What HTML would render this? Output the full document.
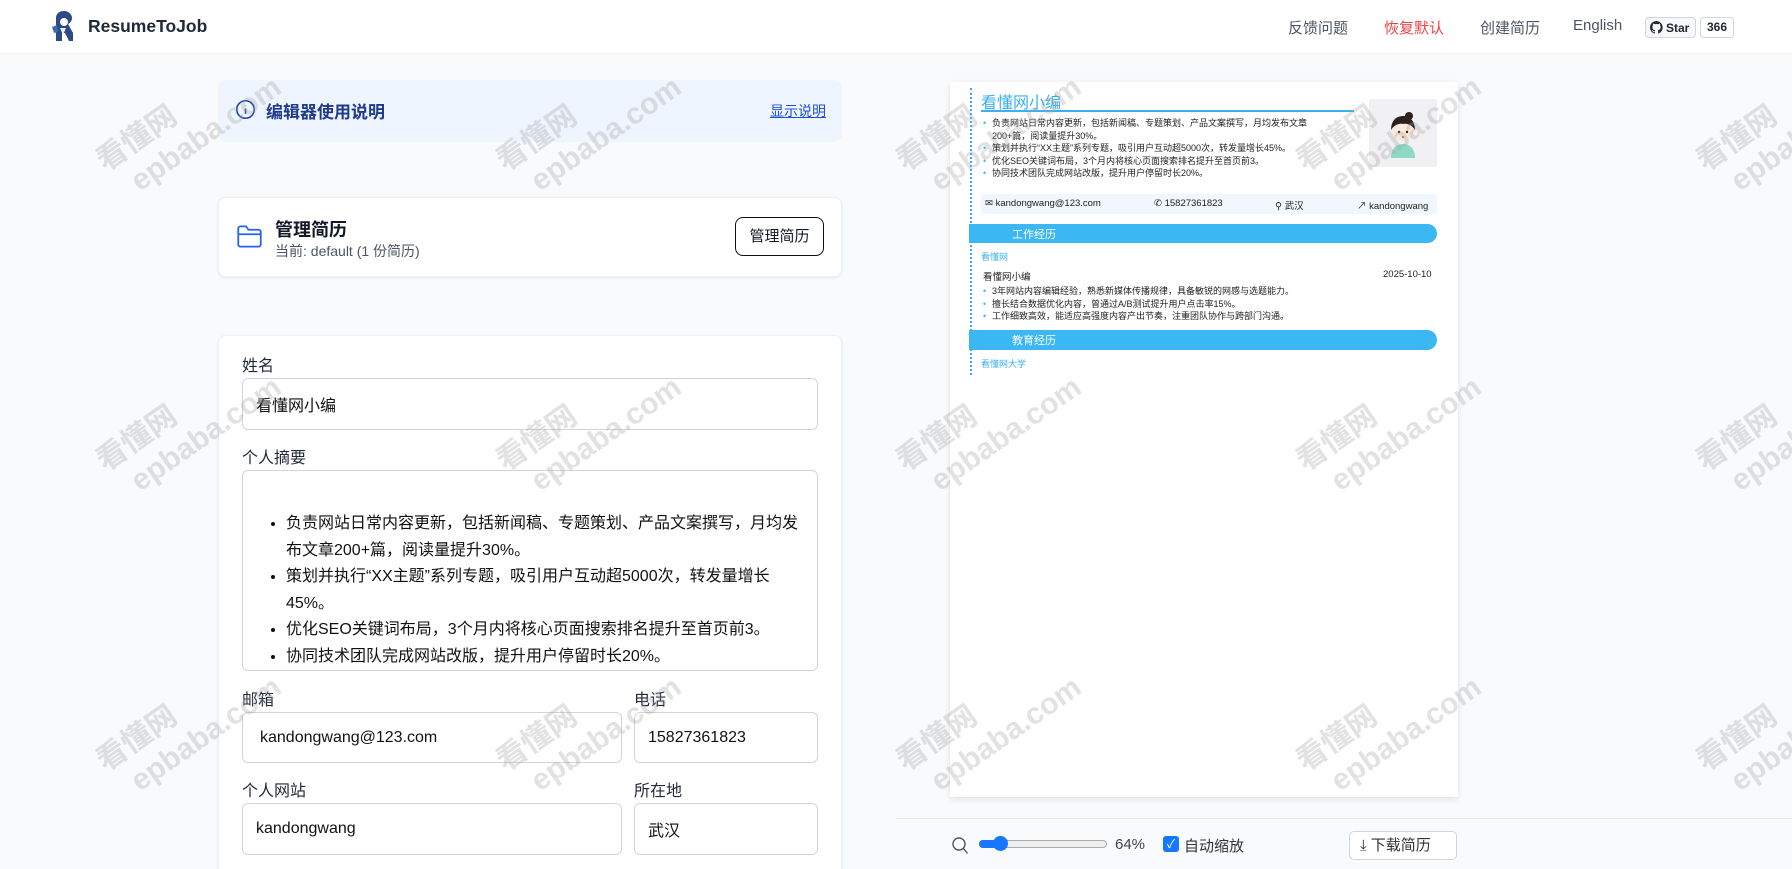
<!DOCTYPE html>
<html style="width:1792px;height:869px;overflow:hidden"><head><meta charset="utf-8">
<style>
*{box-sizing:border-box;margin:0;padding:0}
body{width:1792px;height:869px;overflow:hidden;background:#f8fafc;font-family:"Liberation Sans","Noto Sans CJK SC",sans-serif;color:#111827;position:relative}
.a{position:absolute}
.hdr{left:0;top:0;width:1792px;height:53px;background:#fff;box-shadow:0 1px 2px rgba(0,0,0,.04)}
.nav{top:17px;font-size:15px;color:#4b5563}
.card{background:#fff;border-radius:8px;box-shadow:0 1px 3px rgba(0,0,0,.08);border:1px solid #eef0f3}
.lbl{font-size:16px;color:#1f2937}
.inp{background:#fff;border:1px solid #d1d5db;border-radius:6px;font-size:16px;color:#111;padding-left:13px;display:flex;align-items:center}
.wm{color:rgba(160,160,160,.3);font-size:30px;font-weight:bold;transform:rotate(-35deg);transform-origin:left top;line-height:36px;white-space:nowrap;pointer-events:none}
.rs{font-size:9px;color:#222;line-height:12.5px}
.rs li{list-style:none;position:relative;padding-left:11px}
.rs li:before{content:"•";position:absolute;left:2px;color:#38bdf8}
.sec{background:#3bb7f3;border-radius:0 12px 12px 0;color:#fff;font-size:11px;padding-left:43px;display:flex;align-items:center}
</style></head><body>
<div class="a hdr"></div>
<svg class="a" style="left:47px;top:10px" width="34" height="34" viewBox="0 0 34 34"><path d="M9 31V8c0-5 4-7 8-7s8 3 8 7c0 3-2 5-4 6l5 9v8h-4l-4-8h-3v8z" fill="#2c4a86"/><circle cx="17" cy="12" r="4" fill="#fff"/><path d="M5 17l5-2 1 7-4 1z" fill="#3e68b0"/><path d="M13 18h6l-3 7z" fill="#e8eefb"/></svg>
<div class="a" style="left:88px;top:16px;font-size:17.5px;font-weight:bold;color:#1f2937">ResumeToJob</div>
<div class="a nav" style="left:1288px">反馈问题</div>
<div class="a nav" style="left:1384px;color:#ef4444">恢复默认</div>
<div class="a nav" style="left:1480px">创建简历</div>
<div class="a nav" style="left:1573px">English</div>
<div class="a" style="left:1645px;top:17px;width:51px;height:21px;border:1px solid #d0d7de;border-radius:4px;background:#f6f8fa;font-size:12px;font-weight:bold;display:flex;align-items:center;padding-left:4px;gap:3px;color:#24292f"><svg width="13" height="13" viewBox="0 0 16 16"><path fill="#24292f" d="M8 0a8 8 0 00-2.5 15.6c.4 0 .5-.2.5-.4v-1.5c-2.2.5-2.7-1-2.7-1-.4-.9-.9-1.2-.9-1.2-.7-.5.1-.5.1-.5.8.1 1.2.8 1.2.8.7 1.3 1.9.9 2.3.7.1-.5.3-.9.5-1.1-1.8-.2-3.6-.9-3.6-4 0-.9.3-1.6.8-2.1-.1-.2-.4-1 .1-2.1 0 0 .7-.2 2.2.8a7.4 7.4 0 014 0c1.5-1 2.2-.8 2.2-.8.4 1.1.2 1.9.1 2.1.5.6.8 1.3.8 2.1 0 3.1-1.9 3.7-3.6 3.9.3.3.5.8.5 1.5v2.2c0 .2.1.5.6.4A8 8 0 008 0z"/></svg>Star</div>
<div class="a" style="left:1700px;top:17px;width:34px;height:21px;border:1px solid #d0d7de;border-radius:4px;background:#fff;font-size:12px;font-weight:bold;text-align:center;line-height:19px;color:#24292f">366</div>

<div class="a" style="left:218px;top:80px;width:624px;height:62px;background:#eef5fe;border-radius:8px"></div>
<svg class="a" style="left:235px;top:99px" width="21" height="21" viewBox="0 0 24 24" fill="none" stroke="#1e40af" stroke-width="1.8"><circle cx="12" cy="12" r="10"/><path d="M12 11v6M12 7.5v.5"/></svg>
<div class="a" style="left:266px;top:98px;font-size:17px;font-weight:bold;color:#1e3a8a">编辑器使用说明</div>
<div class="a" style="left:770px;top:101px;font-size:14px;color:#1d4ed8;text-decoration:underline">显示说明</div>

<div class="a card" style="left:218px;top:197px;width:624px;height:80px"></div>
<svg class="a" style="left:236px;top:224px" width="27" height="25" viewBox="0 0 24 22" fill="none" stroke="#2563eb" stroke-width="1.6"><path d="M2 4a2 2 0 012-2h5l2 3h9a2 2 0 012 2v11a2 2 0 01-2 2H4a2 2 0 01-2-2z"/><path d="M2 9h20"/></svg>
<div class="a" style="left:275px;top:216px;font-size:18px;font-weight:bold">管理简历</div>
<div class="a" style="left:275px;top:241px;font-size:14px;color:#4b5563">当前: default (1 份简历)</div>
<div class="a" style="left:735px;top:217px;width:89px;height:39px;border:1px solid #111;border-radius:8px;font-size:15px;text-align:center;line-height:37px">管理简历</div>

<div class="a card" style="left:218px;top:335px;width:624px;height:545px"></div>
<div class="a lbl" style="left:242px;top:352px">姓名</div>
<div class="a inp" style="left:242px;top:378px;width:576px;height:52px">看懂网小编</div>
<div class="a lbl" style="left:242px;top:444px">个人摘要</div>
<div class="a inp" style="left:242px;top:470px;width:576px;height:201px;display:block;padding:40px 6px 0 43px;font-size:16px;line-height:26.5px">
<ul style="list-style:disc">
<li>负责网站日常内容更新，包括新闻稿、专题策划、产品文案撰写，月均发布文章200+篇，阅读量提升30%。</li>
<li>策划并执行“XX主题”系列专题，吸引用户互动超5000次，转发量增长45%。</li>
<li>优化SEO关键词布局，3个月内将核心页面搜索排名提升至首页前3。</li>
<li>协同技术团队完成网站改版，提升用户停留时长20%。</li></ul></div>
<div class="a lbl" style="left:242px;top:686px">邮箱</div>
<div class="a lbl" style="left:634px;top:686px">电话</div>
<div class="a inp" style="left:242px;top:712px;width:380px;height:51px;padding-left:17px">kandongwang@123.com</div>
<div class="a inp" style="left:634px;top:712px;width:184px;height:51px">15827361823</div>
<div class="a lbl" style="left:242px;top:777px">个人网站</div>
<div class="a lbl" style="left:634px;top:777px">所在地</div>
<div class="a inp" style="left:242px;top:803px;width:380px;height:52px">kandongwang</div>
<div class="a inp" style="left:634px;top:803px;width:184px;height:52px">武汉</div>

<div class="a" style="left:950px;top:82px;width:508px;height:715px;background:#fff;box-shadow:0 2px 6px rgba(0,0,0,.1)"></div>
<div class="a" style="left:970px;top:88px;height:287px;border-left:2px dotted #38a8e8"></div>
<div class="a" style="left:981px;top:89px;font-size:16px;color:#3bb0ee">看懂网小编</div>
<div class="a" style="left:981px;top:110px;width:373px;height:2px;background:#3bb0ee"></div>
<div class="a" style="left:1369px;top:99px;width:68px;height:68px;background:#f1f1f3;border-radius:2px"></div>
<svg class="a" style="left:1385px;top:108px" width="36" height="52" viewBox="0 0 36 52"><path d="M6 50c0-10 6-14 12-14s12 4 12 14z" fill="#8fd8c4"/><circle cx="18" cy="22" r="11" fill="#fde8dc"/><path d="M6 22c0-10 6-14 12-14s12 4 12 14c-3-5-8-7-12-6-4-1-9 1-12 6z" fill="#2b2220"/><circle cx="24" cy="8" r="4" fill="#2b2220"/><circle cx="14" cy="24" r="1.2" fill="#222"/><circle cx="22" cy="24" r="1.2" fill="#222"/><circle cx="18" cy="29" r="1" fill="#d33"/></svg>
<ul class="a rs" style="left:981px;top:117px;width:340px">
<li>负责网站日常内容更新，包括新闻稿、专题策划、产品文案撰写，月均发布文章200+篇，阅读量提升30%。</li>
<li>策划并执行“XX主题”系列专题，吸引用户互动超5000次，转发量增长45%。</li>
<li>优化SEO关键词布局，3个月内将核心页面搜索排名提升至首页前3。</li>
<li>协同技术团队完成网站改版，提升用户停留时长20%。</li></ul>
<div class="a" style="left:981px;top:194px;width:456px;height:20px;background:#f0f7fe;font-size:9.5px;color:#222">
<span class="a" style="left:4px;top:4px">✉ kandongwang@123.com</span>
<span class="a" style="left:173px;top:4px">✆ 15827361823</span>
<span class="a" style="left:294px;top:4px">⚲ 武汉</span>
<span class="a" style="left:376px;top:4px">↗ kandongwang</span></div>
<div class="a sec" style="left:969px;top:224px;width:468px;height:19px">工作经历</div>
<div class="a" style="left:981px;top:250px;font-size:9px;color:#3bb0ee">看懂网</div>
<div class="a" style="left:983px;top:269px;font-size:9.5px;color:#222">看懂网小编</div>
<div class="a" style="left:1383px;top:269px;font-size:9.5px;color:#222">2025-10-10</div>
<ul class="a rs" style="left:981px;top:285px;width:440px">
<li>3年网站内容编辑经验，熟悉新媒体传播规律，具备敏锐的网感与选题能力。</li>
<li>擅长结合数据优化内容，曾通过A/B测试提升用户点击率15%。</li>
<li>工作细致高效，能适应高强度内容产出节奏，注重团队协作与跨部门沟通。</li></ul>
<div class="a sec" style="left:969px;top:330px;width:468px;height:20px">教育经历</div>
<div class="a" style="left:981px;top:357px;font-size:9px;color:#3bb0ee">看懂网大学</div>

<div class="a" style="left:896px;top:818px;width:896px;height:1px;background:#e5e7eb"></div>
<svg class="a" style="left:951px;top:836px" width="18" height="19" viewBox="0 0 18 19" fill="none" stroke="#555" stroke-width="1.4"><circle cx="8" cy="8" r="6"/><path d="M12.5 12.5l4 5"/></svg>
<div class="a" style="left:979px;top:840px;width:128px;height:8px;border:1px solid #aaa;border-radius:4px;background:#eee"></div>
<div class="a" style="left:979px;top:840px;width:22px;height:8px;background:#1677ff;border-radius:4px"></div>
<div class="a" style="left:993px;top:836px;width:15px;height:15px;border-radius:50%;background:#1677ff"></div>
<div class="a" style="left:1115px;top:836px;font-size:15px;color:#444">64%</div>
<div class="a" style="left:1163px;top:836px;width:16px;height:16px;background:#1677ff;border-radius:3px;color:#fff;font-size:12px;text-align:center;line-height:16px">✓</div>
<div class="a" style="left:1184px;top:835px;font-size:15px;color:#333">自动缩放</div>
<div class="a" style="left:1349px;top:831px;width:108px;height:29px;border:1px solid #d1d5db;border-radius:5px;background:#fff;font-size:15px;color:#333;line-height:27px;padding-left:10px">⤓ 下载简历</div>

<div class="a wm" style="left:90px;top:150px">看懂网<br>&nbsp;&nbsp;epbaba.com</div>
<div class="a wm" style="left:490px;top:150px">看懂网<br>&nbsp;&nbsp;epbaba.com</div>
<div class="a wm" style="left:890px;top:150px">看懂网<br>&nbsp;&nbsp;epbaba.com</div>
<div class="a wm" style="left:1290px;top:150px">看懂网<br>&nbsp;&nbsp;epbaba.com</div>
<div class="a wm" style="left:1690px;top:150px">看懂网<br>&nbsp;&nbsp;epbaba.com</div>
<div class="a wm" style="left:90px;top:450px">看懂网<br>&nbsp;&nbsp;epbaba.com</div>
<div class="a wm" style="left:490px;top:450px">看懂网<br>&nbsp;&nbsp;epbaba.com</div>
<div class="a wm" style="left:890px;top:450px">看懂网<br>&nbsp;&nbsp;epbaba.com</div>
<div class="a wm" style="left:1290px;top:450px">看懂网<br>&nbsp;&nbsp;epbaba.com</div>
<div class="a wm" style="left:1690px;top:450px">看懂网<br>&nbsp;&nbsp;epbaba.com</div>
<div class="a wm" style="left:90px;top:750px">看懂网<br>&nbsp;&nbsp;epbaba.com</div>
<div class="a wm" style="left:490px;top:750px">看懂网<br>&nbsp;&nbsp;epbaba.com</div>
<div class="a wm" style="left:890px;top:750px">看懂网<br>&nbsp;&nbsp;epbaba.com</div>
<div class="a wm" style="left:1290px;top:750px">看懂网<br>&nbsp;&nbsp;epbaba.com</div>
<div class="a wm" style="left:1690px;top:750px">看懂网<br>&nbsp;&nbsp;epbaba.com</div>
</body></html>
